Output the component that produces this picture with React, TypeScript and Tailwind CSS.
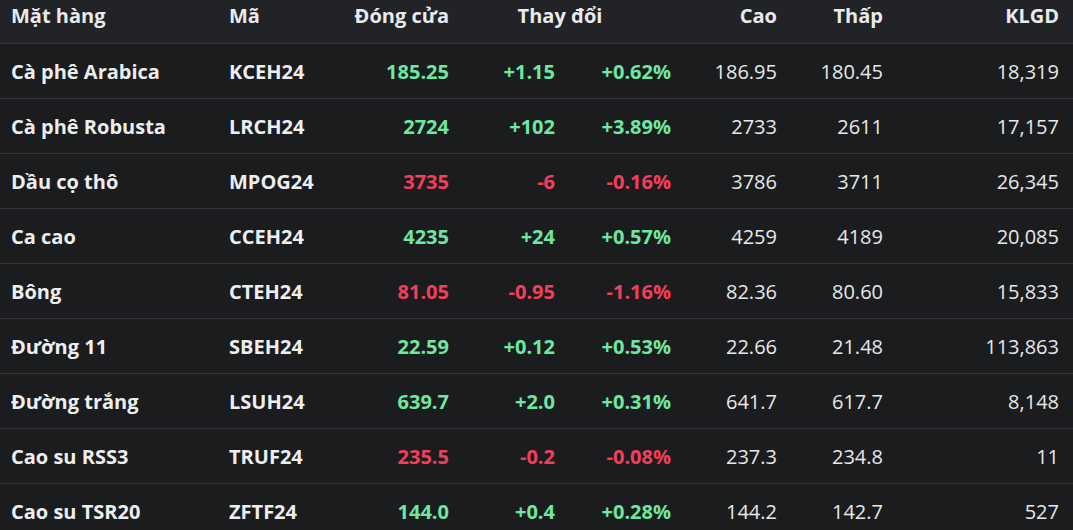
const rows = [
  { name: 'Cà phê Arabica', code: 'KCEH24', close: '185.25', chg: '+1.15', pct: '+0.62%', high: '186.95', low: '180.45', vol: '18,319' },
  { name: 'Cà phê Robusta', code: 'LRCH24', close: '2724', chg: '+102', pct: '+3.89%', high: '2733', low: '2611', vol: '17,157' },
  { name: 'Dầu cọ thô', code: 'MPOG24', close: '3735', chg: '-6', pct: '-0.16%', high: '3786', low: '3711', vol: '26,345' },
  { name: 'Ca cao', code: 'CCEH24', close: '4235', chg: '+24', pct: '+0.57%', high: '4259', low: '4189', vol: '20,085' },
  { name: 'Bông', code: 'CTEH24', close: '81.05', chg: '-0.95', pct: '-1.16%', high: '82.36', low: '80.60', vol: '15,833' },
  { name: 'Đường 11', code: 'SBEH24', close: '22.59', chg: '+0.12', pct: '+0.53%', high: '22.66', low: '21.48', vol: '113,863' },
  { name: 'Đường trắng', code: 'LSUH24', close: '639.7', chg: '+2.0', pct: '+0.31%', high: '641.7', low: '617.7', vol: '8,148' },
  { name: 'Cao su RSS3', code: 'TRUF24', close: '235.5', chg: '-0.2', pct: '-0.08%', high: '237.3', low: '234.8', vol: '11' },
  { name: 'Cao su TSR20', code: 'ZFTF24', close: '144.0', chg: '+0.4', pct: '+0.28%', high: '144.2', low: '142.7', vol: '527' },
]

export default function App() {
  return (
    <div className="min-h-screen bg-[#1b1c1e] font-['Open_Sans',sans-serif] text-[20px]">
      <table className="w-[1073px] table-fixed border-collapse">
        <colgroup>
          <col className="w-[217px]" />
          <col className="w-[133px]" />
          <col className="w-[111px]" />
          <col className="w-[106px]" />
          <col className="w-[116px]" />
          <col className="w-[106px]" />
          <col className="w-[106px]" />
          <col className="w-[178px]" />
        </colgroup>
        <thead>
          <tr className="h-[43px] bg-[#222326] border-b border-[#343538] text-[#e8eaed]">
            <th className="pl-[11px] pb-[11px] text-left font-bold">Mặt hàng</th>
            <th className="pl-3 pb-[11px] text-left font-bold">Mã</th>
            <th className="pr-3 pb-[11px] text-right font-bold">Đóng cửa</th>
            <th colSpan={2} className="pr-6 pb-[11px] text-center font-bold">Thay đổi</th>
            <th className="pr-3 pb-[11px] text-right font-bold">Cao</th>
            <th className="pr-3 pb-[11px] text-right font-bold">Thấp</th>
            <th className="pr-[14px] pb-[11px] text-right font-bold">KLGD</th>
          </tr>
        </thead>
        <tbody>
          {rows.map((r) => {
            const up = !r.chg.startsWith('-')
            const color = up ? 'text-[#6ee7a0]' : 'text-[#f23f5b]'
            return (
              <tr key={r.code} className="h-[55px] border-b border-[#343538]">
                <td className="pl-[11px] pt-[2px] font-bold text-[#eceef0]">{r.name}</td>
                <td className="pl-3 pt-[2px] font-bold text-[#eceef0]">{r.code}</td>
                <td className={`pr-3 pt-[2px] text-right font-bold ${color}`}>{r.close}</td>
                <td className={`pr-3 pt-[2px] text-right font-bold ${color}`}>{r.chg}</td>
                <td className={`pr-3 pt-[2px] text-right font-bold ${color}`}>{r.pct}</td>
                <td className="pr-3 pt-[2px] text-right text-[#e6e8ea]">{r.high}</td>
                <td className="pr-3 pt-[2px] text-right text-[#e6e8ea]">{r.low}</td>
                <td className="pr-[14px] pt-[2px] text-right text-[#e6e8ea]">{r.vol}</td>
              </tr>
            )
          })}
        </tbody>
      </table>
    </div>
  )
}
